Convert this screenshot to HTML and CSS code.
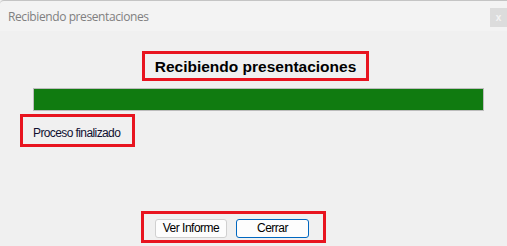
FILE: index.html
```html
<!DOCTYPE html>
<html>
<head>
<meta charset="utf-8">
<link rel="stylesheet" href="styles.css">
</head>
<body>
<div class="window">
  <div class="titlebar">
    <span class="title">Recibiendo presentaciones</span>
    <span class="close">x</span>
  </div>
  <div class="content">
    <div class="heading-box"><span class="heading">Recibiendo presentaciones</span></div>
    <div class="progress"><div class="progress-fill" style="width:100%"></div></div>
    <div class="status-box"><span class="status">Proceso finalizado</span></div>
    <div class="buttons-box">
      <button class="btn">Ver Informe</button>
      <button class="btn btn-default">Cerrar</button>
    </div>
  </div>
</div>
</body>
</html>
```
FILE: styles.css
```css
html, body {
  margin: 0;
  padding: 0;
  background: #f0f0f0;
}
.window {
  width: 507px;
  height: 246px;
  display: flex;
  flex-direction: column;
  background: #f0f0f0;
  font-family: "Liberation Sans", Arial, sans-serif;
  overflow: hidden;
}
.titlebar {
  height: 30px;
  border-top: 1px solid #c4c4c4;
  border-top-left-radius: 4px;
  background: #f3f3f3;
  display: flex;
  align-items: center;
  justify-content: space-between;
}
.title {
  margin-left: 8px;
  margin-top: 1px;
  font-family: "Open Sans", "Liberation Sans", sans-serif;
  font-size: 12px;
  letter-spacing: -0.4px;
  color: #808080;
}
.close {
  width: 17px;
  height: 19px;
  margin-top: 3px;
  background: #dcdcdc;
  color: #f4f4f4;
  font-size: 10px;
  font-weight: bold;
  display: flex;
  align-items: center;
  justify-content: center;
}
.content {
  display: flex;
  flex-direction: column;
  align-items: flex-start;
}
.heading-box {
  margin-top: 20px;
  margin-left: 142px;
  width: 227px;
  height: 30px;
  box-sizing: border-box;
  border: 3px solid #e8141f;
  display: flex;
  align-items: center;
  justify-content: center;
}
.heading {
  font-size: 15.5px;
  font-weight: bold;
  color: #000;
  margin-top: 1px;
}
.progress {
  margin-top: 7px;
  margin-left: 33px;
  width: 451px;
  height: 23px;
  box-sizing: border-box;
  border: 1px solid #bcbcbc;
  background: #e6e6e6;
}
.progress-fill {
  height: 100%;
  background: #107b10;
}
.status-box {
  margin-top: 3px;
  margin-left: 20px;
  width: 115px;
  height: 33px;
  box-sizing: border-box;
  border: 3px solid #e8141f;
  display: flex;
  align-items: center;
  padding-left: 10px;
}
.status {
  font-size: 12px;
  letter-spacing: -0.6px;
  color: #101030;
  margin-top: 4px;
}
.buttons-box {
  margin-top: 64px;
  margin-left: 141px;
  width: 185px;
  height: 32px;
  box-sizing: border-box;
  border: 3px solid #e8141f;
  display: flex;
  align-items: center;
  gap: 9px;
  padding-left: 11px;
  padding-top: 2px;
}
.btn {
  width: 72px;
  height: 19px;
  box-sizing: border-box;
  padding: 0;
  border: 1px solid #d0d0d0;
  border-radius: 3px;
  background: #fdfdfd;
  font-family: "Liberation Sans", Arial, sans-serif;
  font-size: 12px;
  letter-spacing: -0.5px;
  color: #000;
}
.btn-default {
  width: 73px;
  border-color: #0067c0;
}
```
